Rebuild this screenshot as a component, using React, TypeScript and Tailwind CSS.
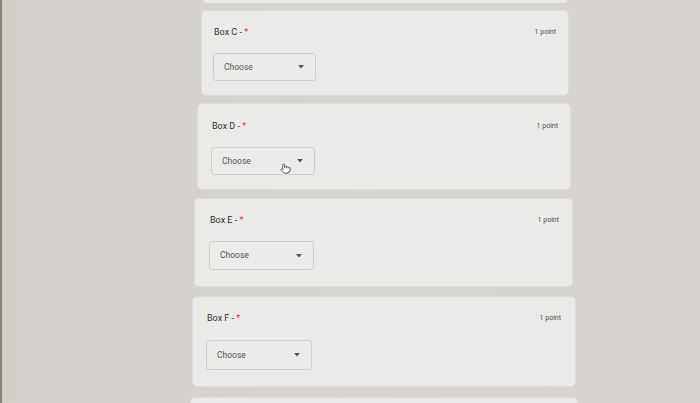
import React from 'react';
import { Pointer } from 'lucide-react';

type Card = { label: string; ml: string; w: string; h: string; mt: string; px: string; titleTop: string; selTop: string; selW: string; cursor?: boolean };

const cards: Card[] = [
  { label: 'C', ml: 'ml-[199px]', w: 'w-[368px]', h: 'h-[86px]', mt: 'mt-[7px]', px: 'pl-[11px] pr-[12px]', titleTop: 'pt-[15px]', selTop: 'mt-[15px]', selW: 'w-[103px] h-[28px]' },
  { label: 'D', ml: 'ml-[195px]', w: 'w-[374px]', h: 'h-[87px]', mt: 'mt-[7px]', px: 'pl-[13px] pr-[12px]', titleTop: 'pt-[16px]', selTop: 'mt-[15px]', selW: 'w-[104px] h-[28px]', cursor: true },
  { label: 'E', ml: 'ml-[192px]', w: 'w-[379px]', h: 'h-[89px]', mt: 'mt-[8px]', px: 'pl-[14px] pr-[13px]', titleTop: 'pt-[15px]', selTop: 'mt-[15px]', selW: 'w-[105px] h-[29px]' },
  { label: 'F', ml: 'ml-[190px]', w: 'w-[384px]', h: 'h-[91px]', mt: 'mt-[9px]', px: 'pl-[13px] pr-[14px]', titleTop: 'pt-[15px]', selTop: 'mt-[16px]', selW: 'w-[106px] h-[30px]' },
];

const App: React.FC = () => {
  return (
    <div
      className="relative w-[700px] h-[403px] overflow-hidden bg-gradient-to-r from-[#d2cec9] via-[#d7d4cf] to-[#d6d2cd] border-l-[2px] border-[#8a8177]"
      style={{ fontFamily: 'Roboto, "Liberation Sans", sans-serif' }}
    >
      <div className="flex flex-col">
        <div className="ml-[201px] w-[364px] h-[3px] rounded-b-[4px] bg-[#e9e9e8]" />
        {cards.map((c) => (
          <div
            key={c.label}
            className={`${c.ml} ${c.w} ${c.h} ${c.mt} ${c.px} ${c.titleTop} relative shrink-0 rounded-[5px] bg-[#eaeae9] border border-[#dedcd9] flex flex-col`}
          >
            <div className="flex items-center justify-between pl-[1px]">
              <span className="text-[9px] leading-[12px] text-[#2f2f2f]">
                Box {c.label} - <span className="text-[#d23b3b]">*</span>
              </span>
              <span className="text-[7px] leading-[10px] text-[#4f4f4f]">1 point</span>
            </div>
            <div className={`${c.selTop} ${c.selW} rounded-[3px] border border-[#cfcecc] bg-[#ebebea] flex items-center justify-between pl-[10px] pr-[11px]`}>
              <span className="text-[8.5px] text-[#555]">Choose</span>
              <svg width="6" height="4" viewBox="0 0 6 4"><path d="M0 0h6L3 3.5z" fill="#555" /></svg>
            </div>
            {c.cursor && (
              <Pointer className="absolute left-[82px] top-[59px] w-[11px] h-[11px] text-[#555] fill-white" strokeWidth={2} />
            )}
          </div>
        ))}
        <div className="ml-[188px] w-[388px] h-[20px] mt-[10px] rounded-t-[5px] bg-[#eaeae9] border border-[#dedcd9]" />
      </div>
    </div>
  );
};

export default App;
